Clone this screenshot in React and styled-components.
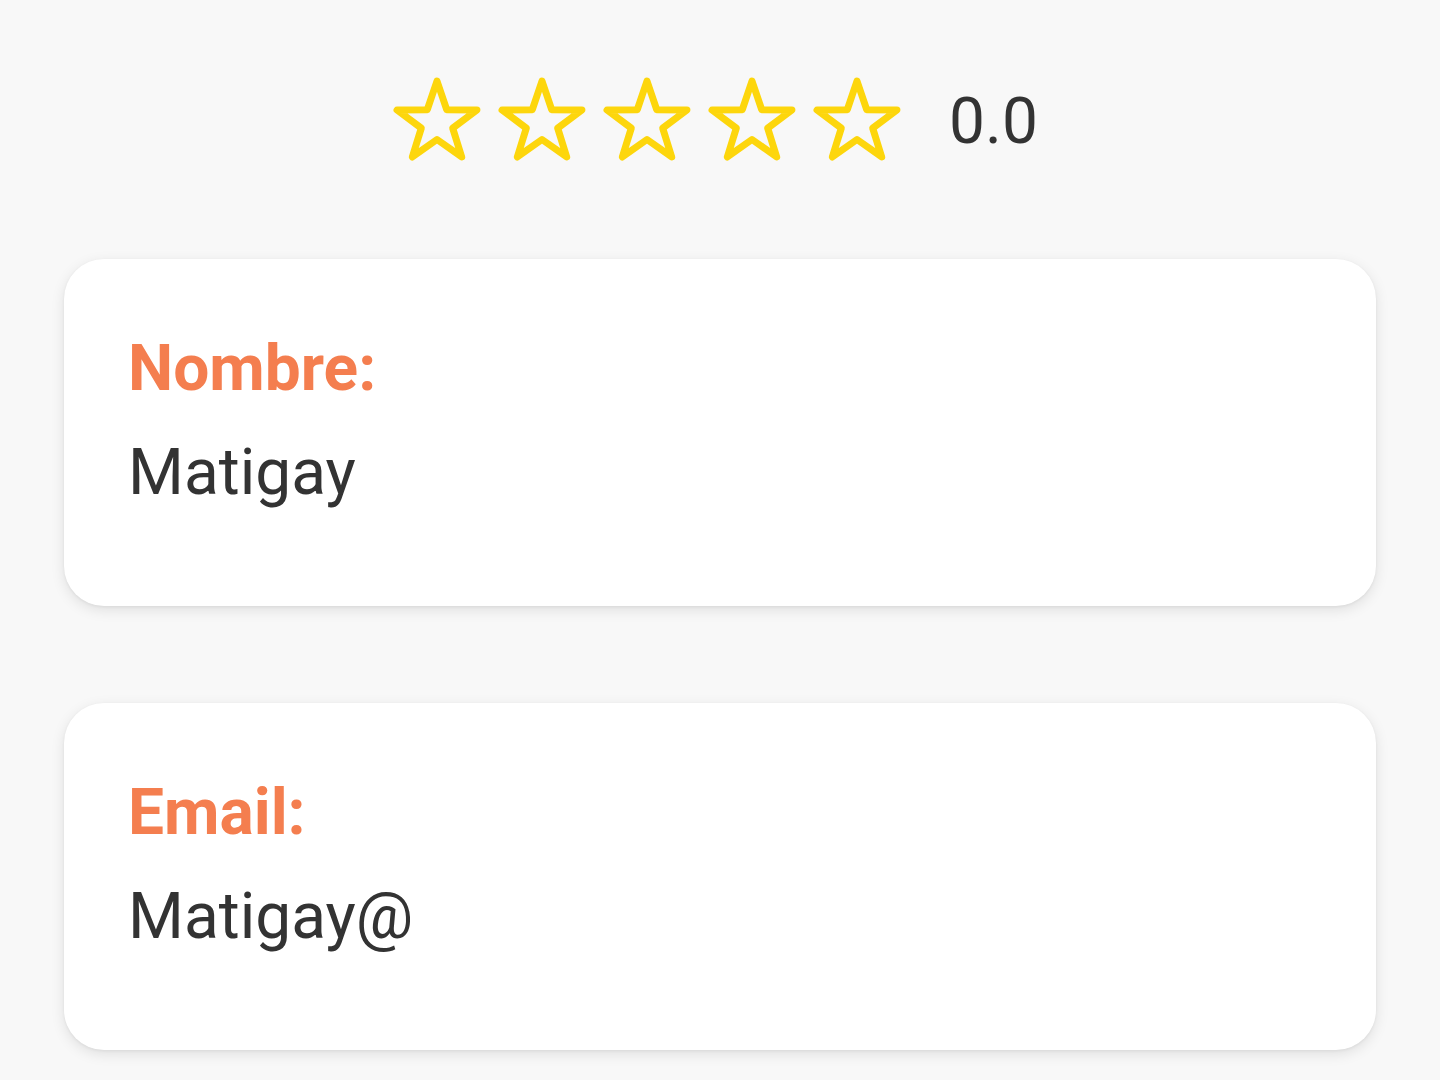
import React from "react";
import styled, { createGlobalStyle } from "styled-components";

const GlobalStyle = createGlobalStyle`
  html, body {
    margin: 0;
    padding: 0;
    background: #f8f8f8;
    font-family: Roboto, "Liberation Sans", sans-serif;
  }
`;

const Page = styled.div`
  width: 1440px;
  min-height: 1080px;
  display: flex;
  flex-direction: column;
  gap: 97px;
  padding-top: 76px;
  box-sizing: border-box;
`;

const RatingRow = styled.div`
  display: flex;
  align-items: center;
  justify-content: center;
  padding-right: 15px;
  height: 92px;
  margin-bottom: -6px;
`;

const Stars = styled.div`
  display: flex;
  gap: 5px;
`;

const Score = styled.span`
  margin-left: 42px;
  font-size: 64px;
  color: #333333;
  line-height: 1;
`;

const Card = styled.section`
  margin: 0 64px;
  background: #ffffff;
  border-radius: 40px;
  box-shadow: 0 4px 14px rgba(0, 0, 0, 0.1), 0 1px 3px rgba(0, 0, 0, 0.06);
  padding: 72px 64px 96px;
  display: flex;
  flex-direction: column;
  gap: 29px;
`;

const Label = styled.div`
  font-size: 64px;
  font-weight: 700;
  color: #f47e4f;
  line-height: 1.172;
`;

const Value = styled.div`
  font-size: 64px;
  color: #333333;
  line-height: 1.172;
`;

const starPoints = (() => {
  const cx = 50;
  const cy = 47;
  const R = 42;
  const r = 16.5;
  const pts = [];
  for (let i = 0; i < 10; i++) {
    const rad = i % 2 === 0 ? R : r;
    const a = (Math.PI / 5) * i - Math.PI / 2;
    pts.push(`${(cx + rad * Math.cos(a)).toFixed(2)},${(cy + rad * Math.sin(a)).toFixed(2)}`);
  }
  return pts.join(" ");
})();

const Star = () => (
  <svg width="100" height="92" viewBox="0 0 100 92">
    <polygon
      points={starPoints}
      fill="none"
      stroke="#fdd60c"
      strokeWidth="7"
      strokeLinejoin="round"
    />
  </svg>
);

const fields = [
  { label: "Nombre:", value: "Matigay" },
  { label: "Email:", value: "Matigay@" },
];

export default function App() {
  return (
    <>
      <GlobalStyle />
      <Page>
        <RatingRow>
          <Stars>
            {[0, 1, 2, 3, 4].map((i) => (
              <Star key={i} />
            ))}
          </Stars>
          <Score>0.0</Score>
        </RatingRow>
        {fields.map((f) => (
          <Card key={f.label}>
            <Label>{f.label}</Label>
            <Value>{f.value}</Value>
          </Card>
        ))}
      </Page>
    </>
  );
}
